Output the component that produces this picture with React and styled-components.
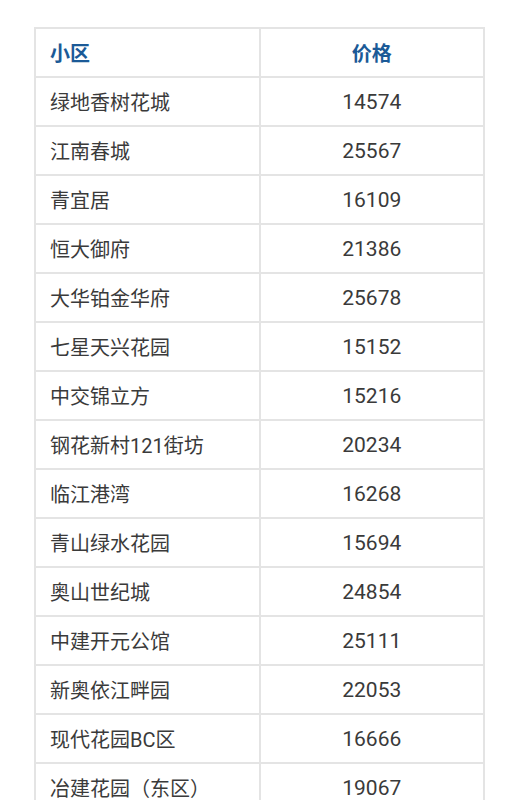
import styled, { createGlobalStyle } from "styled-components";

const GlobalStyle = createGlobalStyle`
body{
  margin:0;
  background:#fff;
  font-family:Roboto, "Noto Sans CJK SC", sans-serif;
}
`

const Page = styled.div`
padding:27px 34px 0 34px;
`

const Table = styled.table`
width:451px;
border-collapse:collapse;
table-layout:fixed;
`

const Cell = styled.td`
height:47px;
border:2px solid #e4e4e4;
font-size:${props => props.align === "center" ? "21px" : "20px"};
color:#3a3a3a;
text-align:${props => props.align || "left"};
padding:0 0 0 ${props => props.align === "center" ? "0" : "14px"};
white-space:nowrap;
`

const HeadCell = styled(Cell).attrs({ as: "th" })`
color:#1b5a97;
font-weight:700;
font-size:20px;
`

const rows = [
   ["绿地香树花城", "14574"],
   ["江南春城", "25567"],
   ["青宜居", "16109"],
   ["恒大御府", "21386"],
   ["大华铂金华府", "25678"],
   ["七星天兴花园", "15152"],
   ["中交锦立方", "15216"],
   ["钢花新村121街坊", "20234"],
   ["临江港湾", "16268"],
   ["青山绿水花园", "15694"],
   ["奥山世纪城", "24854"],
   ["中建开元公馆", "25111"],
   ["新奥依江畔园", "22053"],
   ["现代花园BC区", "16666"],
   ["冶建花园（东区）", "19067"],
]

export default function App() {
   return (
      <Page>
         <GlobalStyle />
         <Table>
            <thead>
               <tr>
                  <HeadCell>小区</HeadCell>
                  <HeadCell align="center">价格</HeadCell>
               </tr>
            </thead>
            <tbody>
               {rows.map(([name, price]) => (
                  <tr key={name}>
                     <Cell>{name}</Cell>
                     <Cell align="center">{price}</Cell>
                  </tr>
               ))}
            </tbody>
         </Table>
      </Page>
   )
}
